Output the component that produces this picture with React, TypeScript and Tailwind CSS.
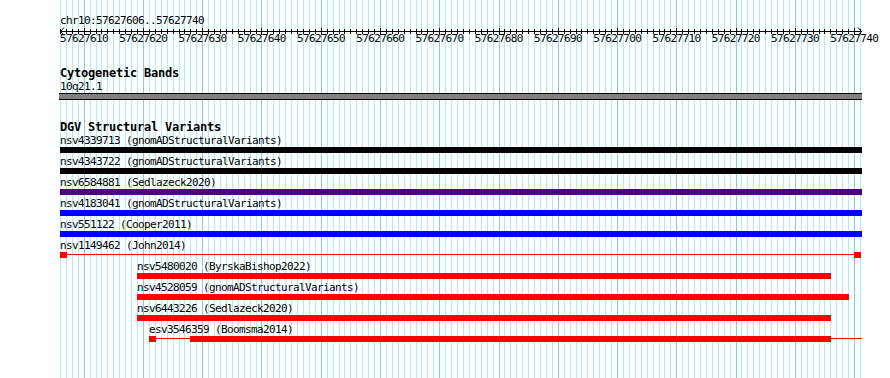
const START = 57627606;
const BASES = 135;
const X0 = 60;
const PX = 800 / BASES;

const Grid = () => {
  const lines = [];
  for (let i = 0; i <= BASES; i++) {
    const x = Math.round(X0 + i * PX);
    const major = (START + i) % 10 === 0;
    lines.push(
      <rect key={i} x={x} y={0} width={1} height={378} fill={major ? "#87c9ea" : "#aeeef0"} />
    );
  }
  return (
    <svg className="absolute left-0 top-0" width={890} height={378}>
      {lines}
    </svg>
  );
};

const Ruler = () => {
  const ticks = [];
  for (let i = 0; i <= BASES; i++) {
    const x = Math.round(X0 + i * PX);
    const major = (START + i) % 10 === 0;
    ticks.push(
      <rect key={i} x={x} y={major ? 2 : 3} width={1} height={major ? 7 : 5} fill="#000" />
    );
  }
  return (
    <svg className="block h-[8px] overflow-visible" width={890} height={8}>
      <rect x={60} y={5} width={802} height={1} fill="#000" />
      {ticks}
      <polyline points="64,1.5 60.5,5.5 64,9.5" fill="none" stroke="#000" strokeWidth={1} />
      <polyline points="858,1.5 861.5,5.5 858,9.5" fill="none" stroke="#000" strokeWidth={1} />
    </svg>
  );
};

type Seg = { w: number; thin?: boolean };

type Variant = {
  label: string;
  left: number;
  color: string;
  segs: Seg[];
};

const variants: Variant[] = [
  { label: "nsv4339713 (gnomADStructuralVariants)", left: 60, color: "bg-black", segs: [{ w: 802 }] },
  { label: "nsv4343722 (gnomADStructuralVariants)", left: 60, color: "bg-black", segs: [{ w: 802 }] },
  { label: "nsv6584881 (Sedlazeck2020)", left: 60, color: "bg-[#4b0082]", segs: [{ w: 802 }] },
  { label: "nsv4183041 (gnomADStructuralVariants)", left: 60, color: "bg-[#0000ff]", segs: [{ w: 802 }] },
  { label: "nsv551122 (Cooper2011)", left: 60, color: "bg-[#0000ff]", segs: [{ w: 802 }] },
  {
    label: "nsv1149462 (John2014)",
    left: 60,
    color: "bg-[#ff0000]",
    segs: [{ w: 7 }, { w: 787, thin: true }, { w: 7 }],
  },
  { label: "nsv5480020 (ByrskaBishop2022)", left: 137, color: "bg-[#ff0000]", segs: [{ w: 694 }] },
  { label: "nsv4528059 (gnomADStructuralVariants)", left: 137, color: "bg-[#ff0000]", segs: [{ w: 712 }] },
  { label: "nsv6443226 (Sedlazeck2020)", left: 137, color: "bg-[#ff0000]", segs: [{ w: 694 }] },
  {
    label: "esv3546359 (Boomsma2014)",
    left: 149,
    color: "bg-[#ff0000]",
    segs: [{ w: 7 }, { w: 34, thin: true }, { w: 641 }, { w: 31, thin: true }],
  },
];

const VariantRow = ({ v }: { v: Variant }) => (
  <div className="h-[21px]" style={{ paddingLeft: v.left }}>
    <div className="h-[11px] whitespace-pre text-[11px] leading-[11px] tracking-[-0.62px]">{v.label}</div>
    <div className="mt-[1px] flex h-[6px] items-start">
      {v.segs.map((s, i) => (
        <div
          key={i}
          className={`${v.color} shrink-0 ${s.thin ? "mt-[2px] h-px" : "h-[6px]"}`}
          style={{ width: s.w }}
        />
      ))}
    </div>
  </div>
);

export default function App() {
  const labels = [];
  for (let p = 57627610; p <= 57627740; p += 10) labels.push(p);

  return (
    <div className="relative h-[378px] w-[890px] overflow-hidden bg-white text-black">
      <Grid />
      <div className="relative pt-[16px] font-['DejaVu_Sans_Mono',monospace]">
        <div className="ml-[60px] h-[10px] whitespace-pre text-[11px] leading-[10px] tracking-[-0.62px]">
          chr10:57627606..57627740
        </div>
        <Ruler />
        <div className="flex h-[10px] pl-[60px] text-[11px] leading-[10px] tracking-[-0.62px]">
          {labels.map((p) => (
            <div key={p} className="w-[59.259px] shrink-0 whitespace-nowrap">
              {p}
            </div>
          ))}
        </div>

        <div className="ml-[60px] mt-[23px] h-[12px] text-[12px] font-bold leading-[12px] tracking-[-0.22px]">
          Cytogenetic Bands
        </div>
        <div className="ml-[60px] mt-[2.5px] h-[10px] text-[11px] leading-[10px] tracking-[-0.62px]">10q21.1</div>
        <div className="ml-[59px] mt-[1.5px] h-[7px] w-[803px] border-y border-black bg-[#808080]" />

        <div className="ml-[60px] mt-[21px] h-[12px] text-[12px] font-bold leading-[12px] tracking-[-0.22px]">
          DGV Structural Variants
        </div>
        <div className="mt-[2px]">
          {variants.map((v) => (
            <VariantRow key={v.label} v={v} />
          ))}
        </div>
      </div>
    </div>
  );
}
